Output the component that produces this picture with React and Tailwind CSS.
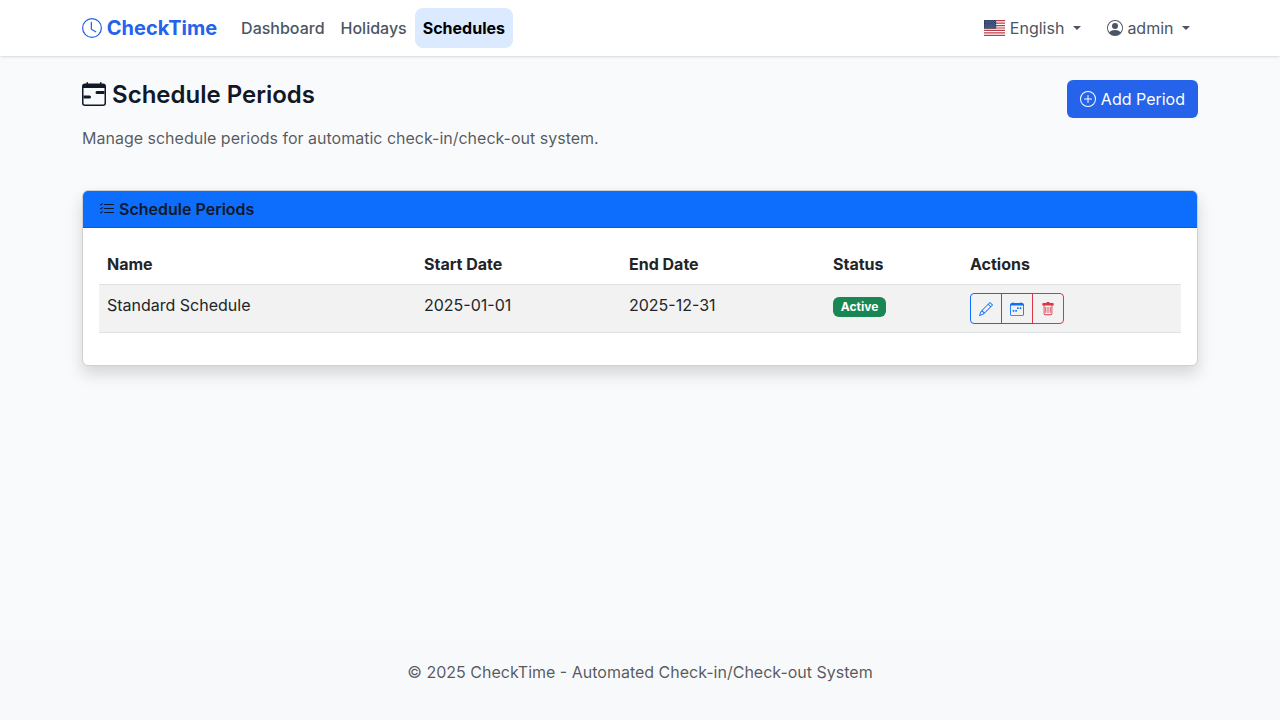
import {
  BsCalendarRange,
  BsCalendarWeek,
  BsClock,
  BsListCheck,
  BsPencil,
  BsPersonCircle,
  BsPlusCircle,
} from 'react-icons/bs';

function UsFlag() {
  const stars = [];
  for (let row = 0; row < 9; row++) {
    const count = row % 2 === 0 ? 6 : 5;
    for (let col = 0; col < count; col++) {
      const x = (row % 2 === 0 ? 30 : 60) + col * 61;
      stars.push(<circle key={`${row}-${col}`} cx={x} cy={26 + row * 26} r="11" />);
    }
  }
  return (
    <svg viewBox="0 0 640 480" className="inline-block h-4 w-[21.33px] align-[-2px]">
      <path fill="#bd3d44" d="M0 0h640v480H0" />
      <path
        stroke="#fff"
        strokeWidth="37"
        d="M0 55.3h640M0 129h640M0 203h640M0 277h640M0 351h640M0 425h640"
      />
      <path fill="#192f5d" d="M0 0h364.8v258.5H0" />
      <g fill="#fff">{stars}</g>
    </svg>
  );
}

function TrashIcon() {
  return (
    <svg viewBox="0 0 16 16" fill="currentColor" className="h-[14px] w-[14px]">
      <path d="M5.5 5.5A.5.5 0 0 1 6 6v6a.5.5 0 0 1-1 0V6a.5.5 0 0 1 .5-.5m2.5 0a.5.5 0 0 1 .5.5v6a.5.5 0 0 1-1 0V6a.5.5 0 0 1 .5-.5m3 .5a.5.5 0 0 0-1 0v6a.5.5 0 0 0 1 0z" />
      <path d="M14.5 3a1 1 0 0 1-1 1H13v9a2 2 0 0 1-2 2H5a2 2 0 0 1-2-2V4h-.5a1 1 0 0 1-1-1V2a1 1 0 0 1 1-1H6a1 1 0 0 1 1-1h2a1 1 0 0 1 1 1h3.5a1 1 0 0 1 1 1zM4.118 4 4 4.059V13a1 1 0 0 0 1 1h6a1 1 0 0 0 1-1V4.059L11.882 4z" />
    </svg>
  );
}

function Caret() {
  return (
    <span className="ml-1 inline-block border-x-[4.8px] border-t-[4.8px] border-x-transparent border-t-current align-[4.08px]" />
  );
}

function Navbar() {
  return (
    <nav className="relative h-14 bg-white shadow-[0_1px_3px_0_rgba(0,0,0,0.1),0_1px_2px_-1px_rgba(0,0,0,0.1)]">
      <div className="mx-auto flex h-full w-[1116px] items-center">
        <a className="mr-4 text-xl leading-[30px] font-bold text-[#2563eb]">
          <BsClock className="inline-block align-[-2.5px]" /> CheckTime
        </a>
        <div className="flex flex-1 font-medium text-[#4b5563]">
          <a className="p-2">Dashboard</a>
          <a className="p-2">Holidays</a>
          <a className="rounded-lg bg-[#dbeafe] p-2 font-bold text-black">Schedules</a>
        </div>
        <div className="flex text-[#4b5563]">
          <a className="mr-[10px] p-2">
            <UsFlag /> English <Caret />
          </a>
          <a className="p-2">
            <BsPersonCircle className="inline-block align-[-2px]" /> admin <Caret />
          </a>
        </div>
      </div>
    </nav>
  );
}

export default function App() {
  return (
    <div className="flex h-screen flex-col overflow-hidden bg-[#f9fafc] font-['Inter',sans-serif] text-base text-[#212529]">
      <Navbar />
      <main className="mx-auto w-[1116px] flex-1 pt-6">
        <div className="flex items-start justify-between">
          <div>
            <h1 className="mb-2 pt-px text-2xl leading-[28.8px] font-semibold text-[#111827]">
              <BsCalendarRange className="inline-block align-[-3px]" /> Schedule Periods
            </h1>
            <p className="pt-2 leading-6 text-[#212529]/75">
              Manage schedule periods for automatic check-in/check-out system.
            </p>
          </div>
          <button className="h-[38px] rounded-md bg-[#2563eb] px-[13px] leading-6 text-white">
            <BsPlusCircle className="inline-block align-[-2px]" /> Add Period
          </button>
        </div>

        <section className="mt-10 overflow-hidden rounded-md border border-[#d0d0d1] bg-white shadow-[0_8px_16px_rgba(0,0,0,0.15)]">
          <div className="h-[37px] border-b border-[#0b5bd1] bg-[#0d6efd] px-4 py-2">
            <h2 className="leading-[20px] font-semibold text-[#111827]">
              <BsListCheck className="inline-block align-[-2px]" /> Schedule Periods
            </h2>
          </div>
          <div className="p-4 pb-8">
            <table className="w-full table-fixed border-collapse text-left">
              <colgroup>
                <col className="w-[317px]" />
                <col className="w-[205px]" />
                <col className="w-[204px]" />
                <col className="w-[137px]" />
                <col />
              </colgroup>
              <thead>
                <tr className="h-[41px] border-b border-[#dee2e6]">
                  <th className="p-2 font-bold">Name</th>
                  <th className="p-2 font-bold">Start Date</th>
                  <th className="p-2 font-bold">End Date</th>
                  <th className="p-2 font-bold">Status</th>
                  <th className="p-2 font-bold">Actions</th>
                </tr>
              </thead>
              <tbody>
                <tr className="h-12 border-b border-[#dee2e6] bg-[#f2f2f2] align-top">
                  <td className="p-2">Standard Schedule</td>
                  <td className="p-2">2025-01-01</td>
                  <td className="p-2">2025-12-31</td>
                  <td className="p-2">
                    <span className="inline-block rounded-md bg-[#198754] px-[7.8px] py-1 text-xs leading-3 font-bold text-white">
                      Active
                    </span>
                  </td>
                  <td className="p-2">
                    <div className="flex text-sm">
                      <button className="flex h-[31px] w-8 items-center justify-center rounded-l border border-[#0d6efd] text-[#0d6efd]">
                        <BsPencil />
                      </button>
                      <button className="-ml-px flex h-[31px] w-8 items-center justify-center border border-[#0d6efd] text-[#0d6efd]">
                        <BsCalendarWeek />
                      </button>
                      <button className="-ml-px flex h-[31px] w-8 items-center justify-center rounded-r border border-[#dc3545] text-[#dc3545]">
                        <TrashIcon />
                      </button>
                    </div>
                  </td>
                </tr>
              </tbody>
            </table>
          </div>
        </section>
      </main>
      <footer className="h-20 bg-[#f8f9fb] pt-5 text-center leading-6 text-[#212529]/75">
        © 2025 CheckTime - Automated Check-in/Check-out System
      </footer>
    </div>
  );
}
